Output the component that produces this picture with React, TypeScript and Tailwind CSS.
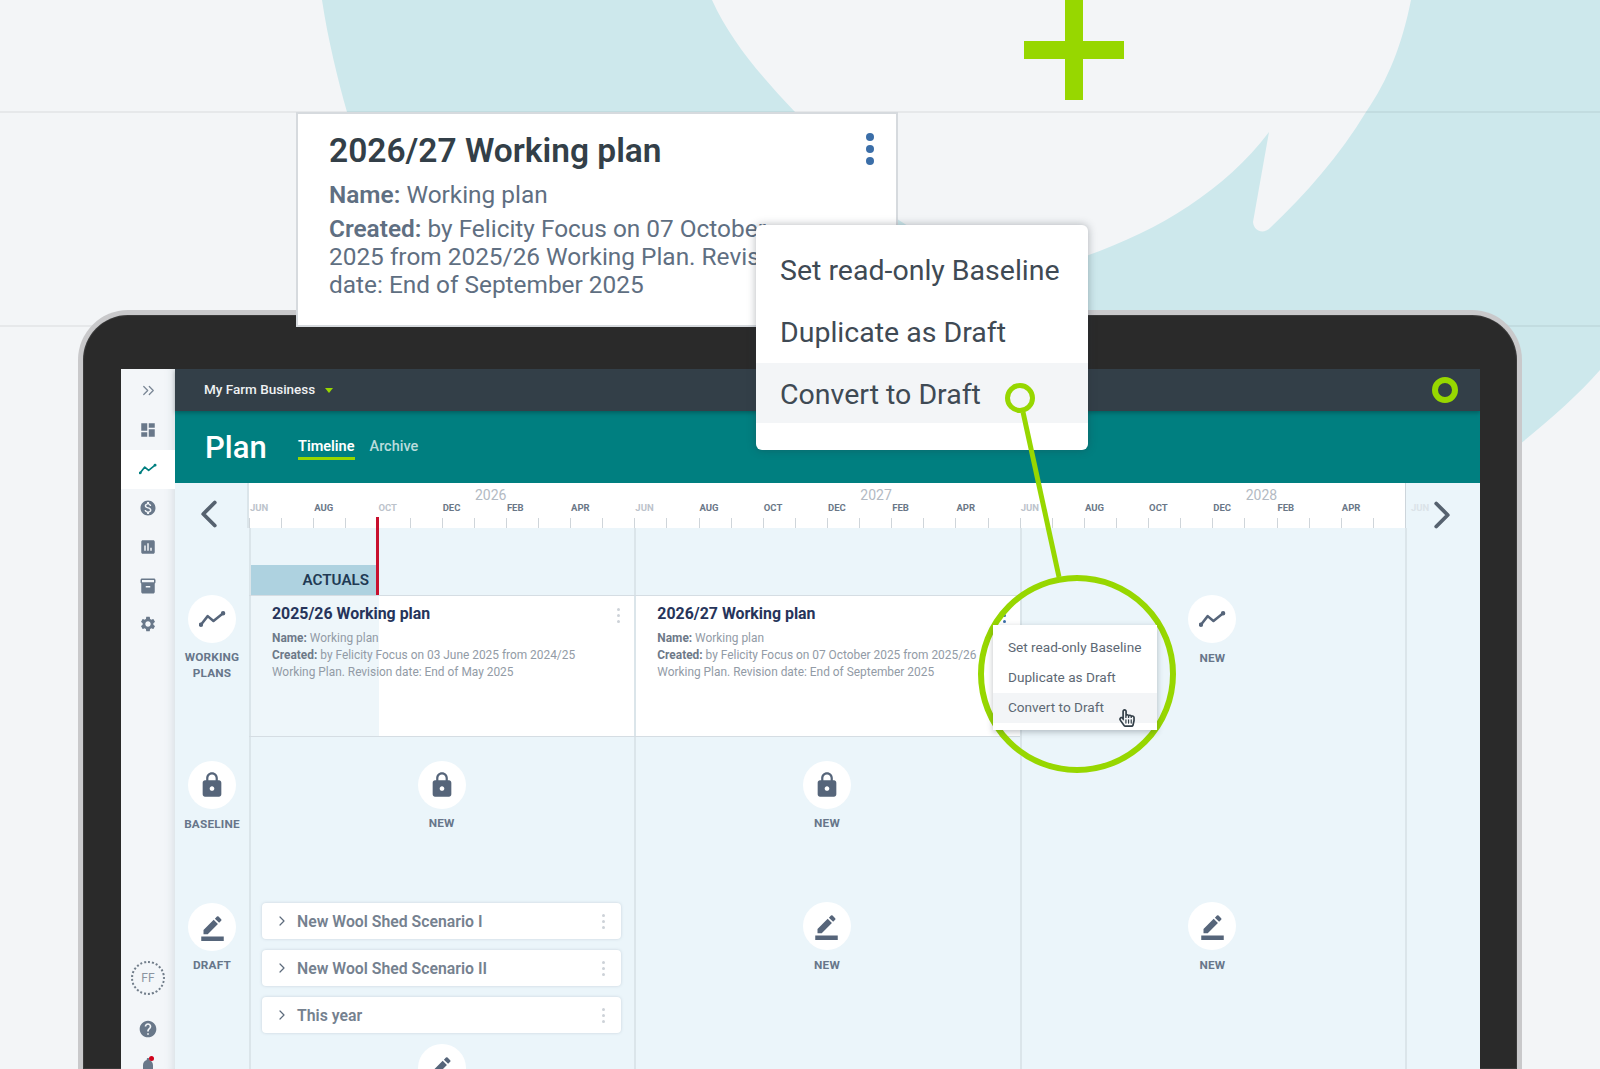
import { ChevronLeft, ChevronRight, ChevronsRight } from "lucide-react";
import { FaRegHandPointer } from "react-icons/fa";
import {
  MdBorderColor,
  MdDashboard,
  MdHelp,
  MdInventory2,
  MdLock,
  MdMonetizationOn,
  MdAssessment,
  MdNotifications,
  MdSettings,
} from "react-icons/md";

const font = "font-['Roboto','Liberation_Sans',sans-serif]";
const months = ["JUN", "AUG", "OCT", "DEC", "FEB", "APR"];
const years = ["2026", "2027", "2028"];

const PlanIcon = ({ className = "" }: { className?: string }) => (
  <svg viewBox="0 0 28 18" className={className} fill="none" stroke="currentColor" strokeWidth="2.6" strokeLinecap="round" strokeLinejoin="round">
    <path d="M2 15 L9 6 L15 11 L25 3" />
    <circle cx="2" cy="15" r="1" fill="currentColor" />
    <circle cx="25" cy="3" r="1" fill="currentColor" />
  </svg>
);

const CircleButton = ({ icon, label }: { icon: React.ReactNode; label?: React.ReactNode }) => (
  <div className="flex flex-col items-center">
    <div className="flex h-[48px] w-[48px] items-center justify-center rounded-full bg-white text-[#56657a]">{icon}</div>
    {label && <div className="mt-[7px] text-center text-[11.8px] font-bold leading-[16px] tracking-[0.2px] text-[#67768a]">{label}</div>}
  </div>
);

const Dots = ({ color = "bg-[#cdd2d8]" }: { color?: string }) => (
  <div className="flex flex-col gap-[3px]">
    <span className={`h-[3px] w-[3px] rounded-full ${color}`} />
    <span className={`h-[3px] w-[3px] rounded-full ${color}`} />
    <span className={`h-[3px] w-[3px] rounded-full ${color}`} />
  </div>
);

const PlanCell = ({ title, created, revision, dots, tinted }: { title: string; created: string; revision: string; dots?: string; tinted?: boolean }) => (
  <div className={`relative h-full border-l-2 border-[#dbe5ea] pl-[21px] pt-[8px] ${tinted ? "bg-[linear-gradient(90deg,#eef6fa_128px,#ffffff_128px)]" : "bg-white"}`}>
    <div className="text-[15.9px] font-bold leading-[20px] text-[#26345a]">{title}</div>
    <div className="mt-[6px] text-[11.9px] leading-[17px] text-[#929ba6]">
      <div>
        <b className="font-bold text-[#6d7988]">Name:</b> Working plan
      </div>
      <div>
        <b className="font-bold text-[#6d7988]">Created:</b> {created}
      </div>
      <div>{revision}</div>
    </div>
    <div className="absolute right-[14px] top-[12px]">
      <Dots color={dots} />
    </div>
  </div>
);

const ScenarioCard = ({ name }: { name: string }) => (
  <div className="flex h-[36px] shrink-0 items-center rounded-[4px] bg-white pl-[12px] pr-[16px] shadow-[0_0_3px_rgba(90,110,130,0.25)]">
    <ChevronRight size={16} strokeWidth={1.8} className="text-[#5d6b7c]" />
    <span className="ml-[7px] flex-1 pt-[2px] text-[15.8px] font-semibold text-[#75818f]">{name}</span>
    <Dots />
  </div>
);

const NavItem = ({ children, active }: { children: React.ReactNode; active?: boolean }) => (
  <div className={`flex h-[38.8px] items-center justify-center ${active ? "bg-white text-[#007f80]" : "text-[#69788a]"}`}>{children}</div>
);

const SideNav = () => (
  <div className="relative z-10 h-[700px] w-[54px] shrink-0 bg-[#f3f6f9] shadow-[inset_-10px_0_8px_-8px_rgba(120,135,150,0.22)]">
    <div className="flex h-[42px] items-center justify-center text-[#7a8796]">
      <ChevronsRight size={19} strokeWidth={1.6} />
    </div>
    <NavItem><MdDashboard size={18} /></NavItem>
    <NavItem active><PlanIcon className="h-[12px] w-[18px]" /></NavItem>
    <NavItem><MdMonetizationOn size={18} /></NavItem>
    <NavItem><MdAssessment size={18} /></NavItem>
    <NavItem><MdInventory2 size={18} /></NavItem>
    <NavItem><MdSettings size={18} /></NavItem>
    <div className="mx-auto mt-[317px] flex h-[34px] w-[34px] items-center justify-center rounded-full border-2 border-dotted border-[#717d8a] text-[12px] text-[#8b95a1]">FF</div>
    <div className="mt-[24px] flex justify-center text-[#69788a]">
      <MdHelp size={20} />
    </div>
    <div className="relative mt-[17px] flex justify-center text-[#69788a]">
      <MdNotifications size={20} />
      <span className="absolute left-[28px] top-0 h-[5px] w-[5px] rounded-full bg-[#d0021b]" />
    </div>
  </div>
);

const Ruler = ({ year }: { year: string }) => (
  <div className="h-[45px] overflow-hidden bg-white">
    <div className="h-[18px] pl-[226px] text-[14px] leading-[24px] text-[#b3bac3]">{year}</div>
    <div className="flex">
      {months.map((m) => (
        <div key={m} className="w-1/6">
          <div className={`h-[17px] pl-[1px] text-[9.5px] font-bold leading-[14px] ${m === "JUN" || (m === "OCT" && year === "2026") ? "text-[#bcc3cb]" : "text-[#6a7787]"}`}>{m}</div>
          <div className="flex h-[10px]">
            <span className="w-1/2 border-l border-[#cfd5da]" />
            <span className="w-1/2 border-l border-[#cfd5da]" />
          </div>
        </div>
      ))}
    </div>
  </div>
);

const Divider = "border-l-2 pr-[2px] border-[#dbe5ea]";

const Timeline = () => (
  <div className="relative grid flex-1 grid-cols-[74px_385.33px_385.33px_385.33px_76px] content-start bg-[#ebf5fa]">
    {/* ruler */}
    <div className="flex h-[45px] items-center justify-center border-r-2 border-[#dbe5ea] text-[#56626f]">
      <ChevronLeft size={46} strokeWidth={2} className="ml-[-4px] mt-[17px] shrink-0" />
    </div>
    {years.map((y) => (
      <Ruler key={y} year={y} />
    ))}
    <div className="relative h-[45px] border-l border-[#cdd5db] pl-[5px]">
      <div className="pt-[18px] text-[9.5px] font-bold leading-[14px] text-[#dbe3e8]">JUN</div>
      <ChevronRight size={46} strokeWidth={2} className="absolute left-[13px] top-[9px] text-[#56626f]" />
    </div>

    {/* actuals band */}
    <div className="h-[67px]" />
    <div className="flex h-[67px] items-end border-l-2 border-[#dbe5ea]">
      <div className="flex h-[30px] w-[126px] items-center justify-end bg-[#aed2e0] pr-[8px] text-[15.2px] font-semibold text-[#1f3a54]">ACTUALS</div>
    </div>
    <div className={`h-[67px] ${Divider}`} />
    <div className={`h-[67px] ${Divider}`} />
    <div className={`h-[67px] ${Divider}`} />

    {/* working plans */}
    <div className="h-[142px]">
      <CircleButton icon={<PlanIcon className="h-[18px] w-[27px]" />} label={<div className="-mt-[1px]">WORKING<br />PLANS</div>} />
    </div>
    <div className="h-[142px] border-y border-[#d5dde3]">
      <PlanCell
        tinted
        title="2025/26 Working plan"
        created="by Felicity Focus on 03 June 2025 from 2024/25"
        revision="Working Plan. Revision date: End of May 2025"
      />
    </div>
    <div className="h-[142px] border-y border-[#d5dde3]">
      <PlanCell
        title="2026/27 Working plan"
        created="by Felicity Focus on 07 October 2025 from 2025/26"
        revision="Working Plan. Revision date: End of September 2025"
        dots="bg-[#3b6ea8]"
      />
    </div>
    <div className={`h-[142px] ${Divider}`}>
      <CircleButton icon={<PlanIcon className="h-[18px] w-[27px]" />} label="NEW" />
    </div>
    <div className={`h-[142px] ${Divider}`} />

    {/* baseline */}
    <div className="h-[151px] pt-[24px]">
      <CircleButton icon={<MdLock size={28} />} label="BASELINE" />
    </div>
    <div className={`h-[151px] pt-[24px] ${Divider}`}>
      <CircleButton icon={<MdLock size={28} />} label={<div className="-mt-[1px]">NEW</div>} />
    </div>
    <div className={`h-[151px] pt-[24px] ${Divider}`}>
      <CircleButton icon={<MdLock size={28} />} label={<div className="-mt-[1px]">NEW</div>} />
    </div>
    <div className={`h-[151px] ${Divider}`} />
    <div className={`h-[151px] ${Divider}`} />

    {/* draft */}
    <div className="h-[200px] pt-[15px]">
      <CircleButton icon={<MdBorderColor size={27} />} label={<div className="-mt-[1px]">DRAFT</div>} />
    </div>
    <div className="flex h-[200px] flex-col gap-[11px] border-l-2 border-[#dbe5ea] pl-[11px] pr-[13px] pt-[15px]">
      <ScenarioCard name="New Wool Shed Scenario I" />
      <ScenarioCard name="New Wool Shed Scenario II" />
      <ScenarioCard name="This year" />
      <div className="shrink-0">
        <CircleButton icon={<MdBorderColor size={27} />} />
      </div>
    </div>
    <div className={`h-[200px] pt-[14px] ${Divider}`}>
      <CircleButton icon={<MdBorderColor size={27} />} label="NEW" />
    </div>
    <div className={`h-[200px] pt-[14px] ${Divider}`}>
      <CircleButton icon={<MdBorderColor size={27} />} label="NEW" />
    </div>
    <div className={`h-[200px] ${Divider}`} />

    {/* today marker */}
    <div className="absolute left-[201px] top-[34px] h-[78px] w-[3px] bg-[#c8102e]" />
  </div>
);

const Laptop = () => (
  <div className="ml-[78px] h-[759px] w-[1444px] overflow-hidden rounded-t-[50px] border-[5px] border-b-0 border-[#c9c9cb] bg-[#2a2a2a] pl-[38px] pr-[37px] pt-[54px] shadow-[inset_0_0_0_1px_#3a3a3a]">
    <div className="flex h-[710px] overflow-hidden bg-[#ebf5fa]">
      <SideNav />
      <div className="flex min-w-0 flex-1 flex-col">
        <div className="relative z-10 flex h-[42px] shrink-0 items-center justify-between bg-[#333f48] pl-[29px] pr-[22px] shadow-[0_2px_4px_rgba(0,0,0,0.25)]">
          <div className="flex items-center pb-[2px] text-[13.5px] font-medium text-[#eef1f3]">
            My Farm Business
            <span className="ml-[10px] mt-[2px] h-0 w-0 border-x-[4px] border-t-[5px] border-x-transparent border-t-[#97d700]" />
          </div>
          <div className="h-[26px] w-[26px] rounded-full border-[6px] border-[#97d700]" />
        </div>
        <div className="flex h-[72px] shrink-0 items-center bg-[#007f80] pl-[30px] text-white">
          <div className="w-[93px] text-[31px] font-medium leading-none">Plan</div>
          <div className="border-b-[3px] border-[#97d700] pt-[3px] text-[14.5px] font-semibold leading-[20px]">Timeline</div>
          <div className="ml-[15px] text-[14.5px] font-medium leading-[20px] text-[#b9dcdc]">Archive</div>
        </div>
        <Timeline />
      </div>
    </div>
  </div>
);

export default function App() {
  return (
    <div className={`relative h-[1069px] w-[1600px] overflow-hidden bg-[#f3f5f7] pt-[310px] ${font}`}>
      {/* background speech-bubble shape */}
      <svg className="absolute left-0 top-0" width="1600" height="1069" viewBox="0 0 1600 1069">
        <path
          d="M322 0 C328 40 338 80 347 112 L420 330 L1400 700 L1520 444 C1550 420 1578 395 1600 370 L1600 0 L1411 0 C1402 45 1388 80 1366 112 C1340 155 1305 195 1270 228 C1264 234 1254 232 1253 222 L1269 132 C1225 190 1160 230 1086 256 C960 285 860 210 795 112 C760 75 730 40 712 0 Z"
          fill="#cde8ec"
        />
        <path d="M0 112 H1600 M0 326 H1600" stroke="#000" strokeOpacity="0.05" strokeWidth="2" />
      </svg>

      {/* green plus */}
      <div className="absolute left-[1065px] top-0 h-[100px] w-[18px] bg-[#97d700]" />
      <div className="absolute left-[1024px] top-[41px] h-[18px] w-[100px] bg-[#97d700]" />

      <div className="relative z-0">
        <Laptop />
      </div>

      {/* detail card */}
      <div className="absolute left-[296px] top-[112px] h-[215px] w-[602px] overflow-hidden border-2 border-[#d6dade] bg-white pl-[31px] pt-[17px]">
        <div className="text-[33.5px] font-semibold leading-[40px] text-[#333f48]">2026/27 Working plan</div>
        <div className="mt-[9px] text-[24.4px] leading-[30px] text-[#5f6f82]">
          <b className="font-semibold">Name:</b> Working plan
        </div>
        <div className="mt-[5px] whitespace-nowrap text-[24.4px] leading-[28px] text-[#5f6f82]">
          <b className="font-semibold">Created:</b> by Felicity Focus on 07 October
          <br />
          2025 from 2025/26 Working Plan. Revision
          <br />
          date: End of September 2025
        </div>
        <div className="absolute right-[22px] top-[19px] flex flex-col gap-[4px]">
          <span className="h-[8px] w-[8px] rounded-full bg-[#3b6ea8]" />
          <span className="h-[8px] w-[8px] rounded-full bg-[#3b6ea8]" />
          <span className="h-[8px] w-[8px] rounded-full bg-[#3b6ea8]" />
        </div>
      </div>

      {/* big menu */}
      <div className="absolute left-[756px] top-[225px] h-[225px] w-[332px] rounded-[6px] bg-white pt-[15px] text-[28.5px] text-[#3f4a54] shadow-[0_0_8px_rgba(40,50,60,0.35)]">
        <div className="flex h-[61px] items-center pl-[24px] pt-[2px]">Set read-only Baseline</div>
        <div className="flex h-[62px] items-center pl-[24px] pt-[3px]">Duplicate as Draft</div>
        <div className="flex h-[60px] items-center bg-[#f3f5f7] pl-[24px] pt-[4px]">Convert to Draft</div>
      </div>

      {/* magnifier */}
      <div className="absolute left-[978px] top-[575px] h-[198px] w-[198px] rounded-full border-[6px] border-[#97d700]" />
      <div className="absolute left-[993px] top-[625px] h-[105px] w-[164px] bg-white pt-[8px] text-[13.6px] text-[#5d6874] shadow-[0_2px_6px_rgba(40,50,60,0.3)]">
        <div className="flex h-[30px] items-center pb-[2px] pl-[15px]">Set read-only Baseline</div>
        <div className="flex h-[30px] items-center pb-[2px] pl-[15px]">Duplicate as Draft</div>
        <div className="flex h-[30px] items-center bg-[#f3f5f7] pb-[2px] pl-[15px]">Convert to Draft</div>
        <FaRegHandPointer size={18} className="absolute left-[125px] top-[84px] text-[#333f48]" />
      </div>

      {/* callout line */}
      <svg className="absolute left-0 top-0" width="1600" height="1069" viewBox="0 0 1600 1069" fill="none" stroke="#97d700" strokeWidth="5">
        <path d="M1023 412 L1059 577" />
        <circle cx="1020" cy="398" r="12.5" />
      </svg>
    </div>
  );
}
